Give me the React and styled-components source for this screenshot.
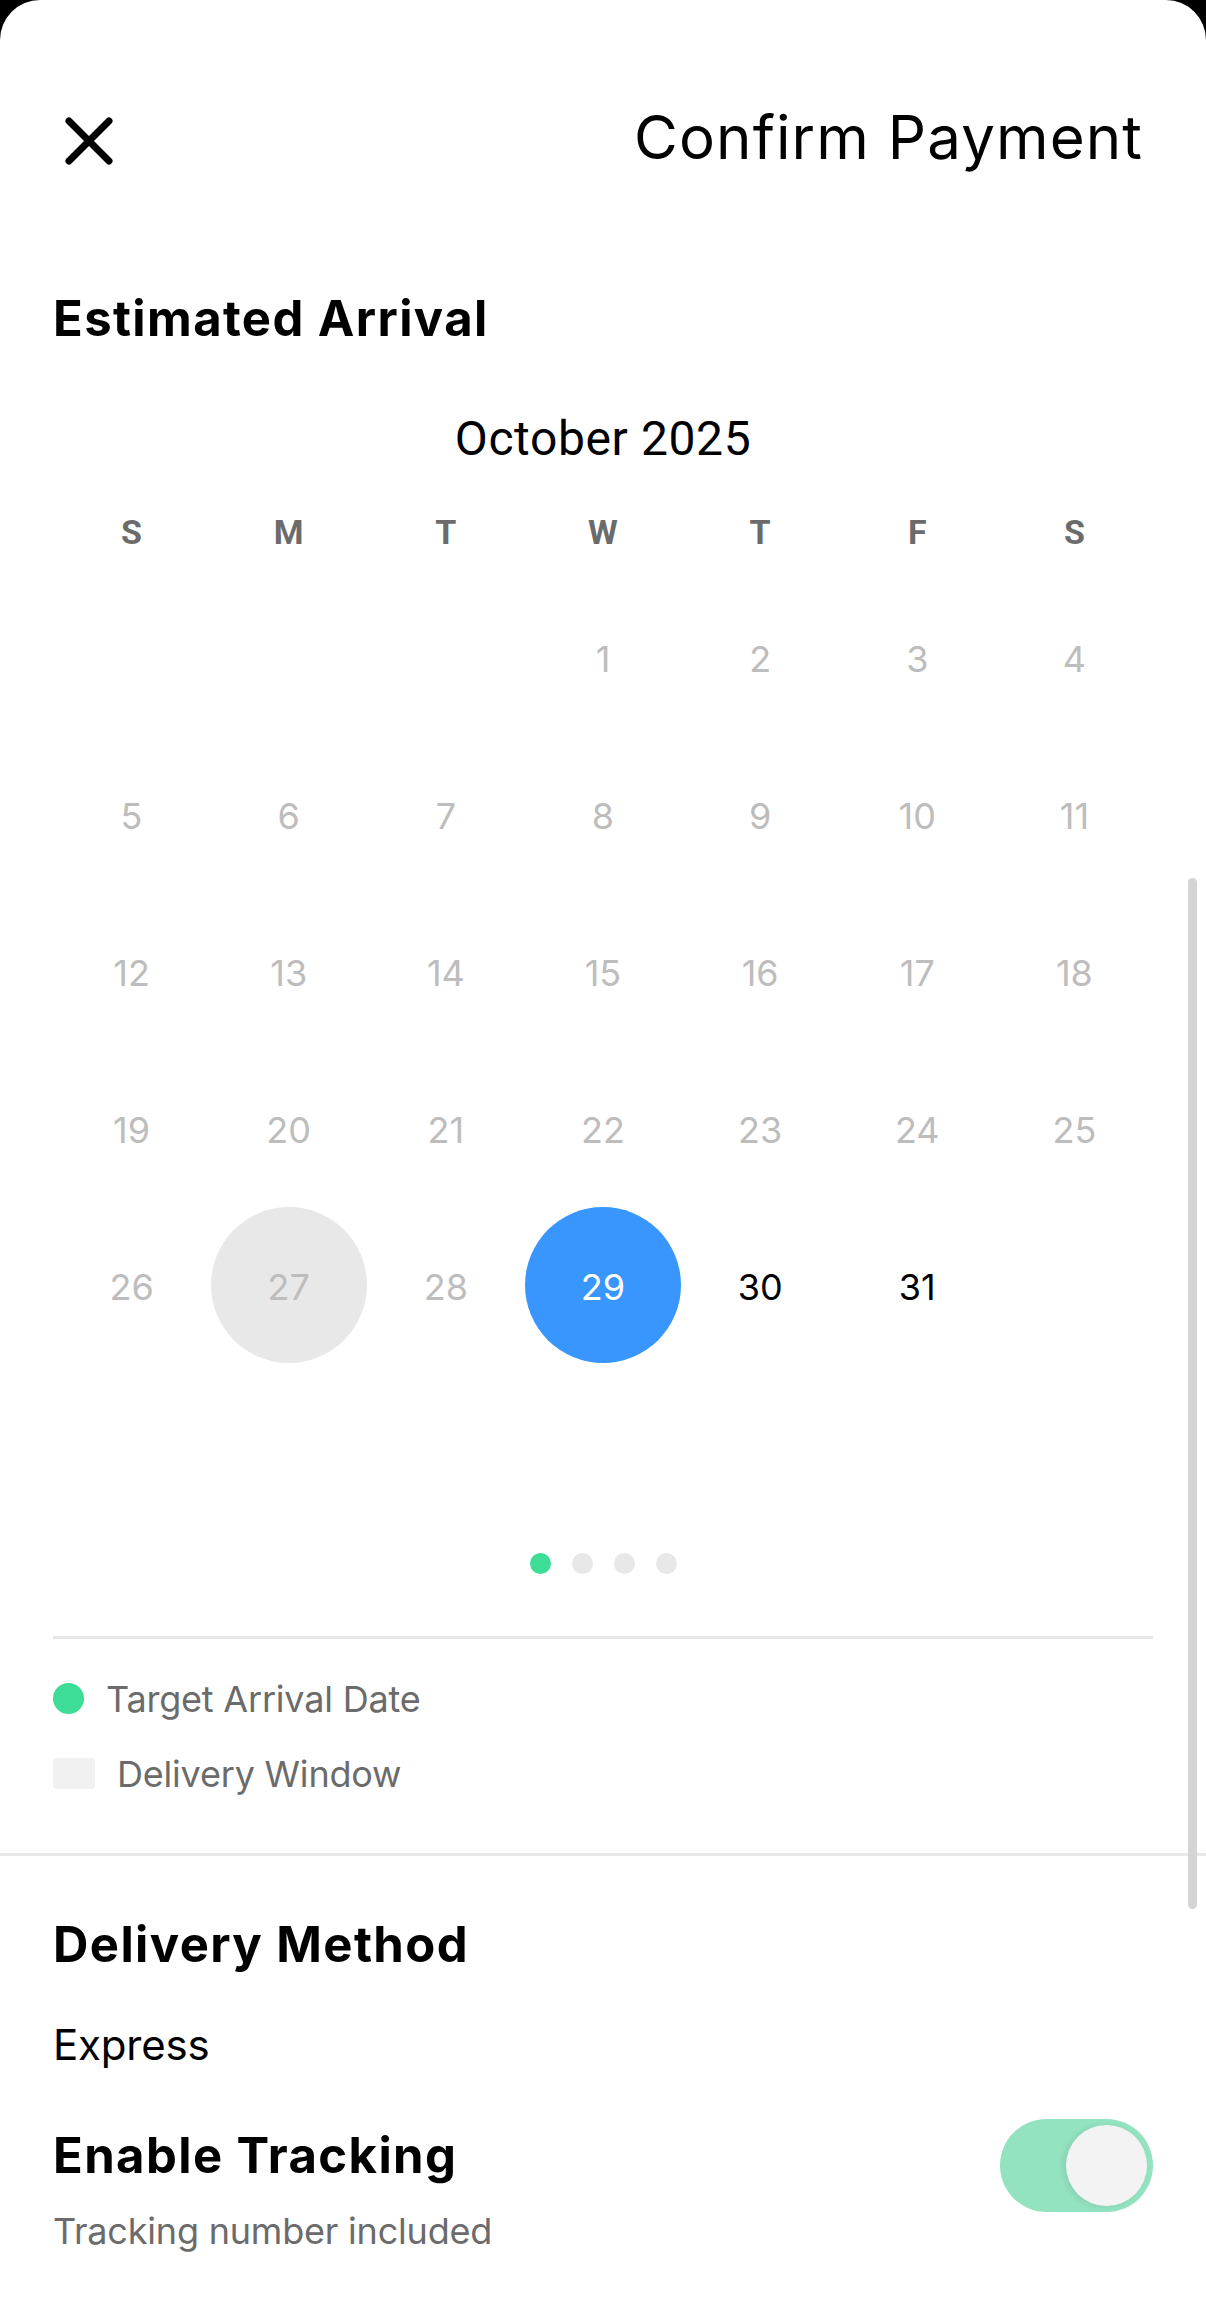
import React from "react";
import styled, { createGlobalStyle } from "styled-components";

const GlobalStyle = createGlobalStyle`
  html, body {
    margin: 0;
    padding: 0;
    background: #000;
  }
  body {
    font-family: Inter, "Noto Sans", sans-serif;
    -webkit-font-smoothing: antialiased;
  }
  * { box-sizing: border-box; }
`;

const Sheet = styled.div`
  position: relative;
  width: 1206px;
  min-height: 2307px;
  background: #fff;
  border-radius: 40px 40px 0 0;
  padding-top: 101px;
  overflow: hidden;
`;

const Header = styled.header`
  display: flex;
  align-items: center;
  justify-content: space-between;
  height: 72px;
  padding: 0 63px 0 65px;
`;

const CloseButton = styled.button`
  display: flex;
  align-items: center;
  justify-content: center;
  width: 48px;
  height: 48px;
  padding: 0;
  margin-top: 8px;
  border: none;
  background: transparent;
  cursor: pointer;
`;

const Title = styled.h1`
  margin: 0;
  font-size: 60px;
  line-height: 72px;
  font-weight: 400;
  color: #000;
  letter-spacing: 1.1px;
`;

const Section = styled.section`
  padding: ${(p) => p.$pad || "0 53px"};
`;

const SectionTitle = styled.h2`
  margin: 0;
  font-size: 49px;
  line-height: 58px;
  font-weight: 700;
  color: #000;
  letter-spacing: 1.4px;
`;

const Calendar = styled.div`
  margin-top: 62px;
`;

const MonthTitle = styled.div`
  text-align: center;
  font-family: Roboto, "Liberation Sans", sans-serif;
  font-size: 48px;
  line-height: 58px;
  color: #000;
  letter-spacing: 0.6px;
`;

const WeekGrid = styled.div`
  display: grid;
  grid-template-columns: repeat(7, 1fr);
  margin-top: 18px;
`;

const WeekDay = styled.div`
  height: 92px;
  line-height: 92px;
  text-align: center;
  font-family: Roboto, "Liberation Sans", sans-serif;
  font-size: 34px;
  font-weight: 700;
  color: #6b6b6b;
`;

const DayGrid = styled.div`
  display: grid;
  grid-template-columns: repeat(7, 1fr);
  grid-auto-rows: 157px;
`;

const DayCell = styled.div`
  display: flex;
  align-items: center;
  justify-content: center;
`;

const Day = styled.div`
  width: 156px;
  height: 156px;
  border-radius: 50%;
  display: flex;
  align-items: center;
  justify-content: center;
  padding-top: 4px;
  font-size: 36px;
  font-weight: 400;
  background: ${(p) =>
    p.$variant === "selected" ? "#3896fe" : p.$variant === "window" ? "#e8e8e8" : "transparent"};
  color: ${(p) =>
    p.$variant === "selected" ? "#fff" : p.$variant === "active" ? "#000" : "#bdbdbd"};
`;

const Pager = styled.div`
  display: flex;
  justify-content: center;
  gap: 21px;
  margin-top: 33px;
`;

const PagerDot = styled.span`
  width: 21px;
  height: 21px;
  border-radius: 50%;
  background: ${(p) => (p.$active ? "#3ddc97" : "#e8e8e8")};
`;

const Divider = styled.div`
  height: 3px;
  background: #e8e8e8;
  margin: ${(p) => p.$margin || "0"};
`;

const Legend = styled.div`
  display: flex;
  flex-direction: column;
  gap: 30px;
  padding: 37px 0 57px;
`;

const LegendRow = styled.div`
  display: flex;
  align-items: center;
  height: 45px;
  gap: ${(p) => p.$gap || "22px"};
`;

const LegendDot = styled.span`
  width: 31px;
  height: 31px;
  border-radius: 50%;
  background: #3ddc97;
  flex-shrink: 0;
`;

const LegendBox = styled.span`
  width: 42px;
  height: 31px;
  border-radius: 4px;
  background: #f0f1f0;
  flex-shrink: 0;
`;

const Muted = styled.span`
  font-size: 36px;
  line-height: 44px;
  color: #6b6b6b;
  letter-spacing: -0.2px;
`;

const Value = styled.div`
  margin-top: 46px;
  font-size: 42px;
  line-height: 50px;
  color: #000;
  letter-spacing: -0.2px;
`;

const ToggleRow = styled.div`
  display: flex;
  align-items: flex-start;
  justify-content: space-between;
  margin-top: 57px;
`;

const ToggleText = styled.div`
  display: flex;
  flex-direction: column;
  gap: 24px;
`;

const Switch = styled.div`
  position: relative;
  width: 153px;
  height: 93px;
  margin-top: -8px;
  border-radius: 47px;
  background: #93e2c0;
  flex-shrink: 0;
`;

const Thumb = styled.span`
  position: absolute;
  top: 6px;
  right: 6px;
  width: 81px;
  height: 81px;
  border-radius: 50%;
  background: #f2f3f2;
  box-shadow: -3px 1px 6px rgba(0, 0, 0, 0.08);
`;

const ScrollBar = styled.div`
  position: absolute;
  right: 9px;
  top: 878px;
  width: 9px;
  height: 1031px;
  border-radius: 5px;
  background: #d4d4d4;
`;

const CloseIcon = () => (
  <svg width="48" height="48" viewBox="0 0 48 48" fill="none">
    <path d="M4 4L44 44M44 4L4 44" stroke="#000" strokeWidth="7" strokeLinecap="round" />
  </svg>
);

const weekdays = ["S", "M", "T", "W", "T", "F", "S"];

function buildDays() {
  const cells = [];
  for (let i = 0; i < 3; i++) cells.push(null);
  for (let d = 1; d <= 31; d++) cells.push(d);
  while (cells.length < 42) cells.push(null);
  return cells;
}

function variantFor(d) {
  if (d === 29) return "selected";
  if (d === 27) return "window";
  if (d === 30 || d === 31) return "active";
  return "past";
}

export default function App() {
  const days = buildDays();
  return (
    <>
      <GlobalStyle />
      <Sheet>
        <Header>
          <CloseButton aria-label="Close">
            <CloseIcon />
          </CloseButton>
          <Title>Confirm Payment</Title>
        </Header>

        <Section $pad="117px 53px 0">
          <SectionTitle>Estimated Arrival</SectionTitle>
          <Calendar>
            <MonthTitle>October 2025</MonthTitle>
            <WeekGrid>
              {weekdays.map((w, i) => (
                <WeekDay key={i}>{w}</WeekDay>
              ))}
            </WeekGrid>
            <DayGrid>
              {days.map((d, i) => (
                <DayCell key={i}>
                  {d && <Day $variant={variantFor(d)}>{d}</Day>}
                </DayCell>
              ))}
            </DayGrid>
          </Calendar>
          <Pager>
            <PagerDot $active />
            <PagerDot />
            <PagerDot />
            <PagerDot />
          </Pager>
          <Divider $margin="62px 0 0" />
          <Legend>
            <LegendRow>
              <LegendDot />
              <Muted>Target Arrival Date</Muted>
            </LegendRow>
            <LegendRow>
              <LegendBox />
              <Muted>Delivery Window</Muted>
            </LegendRow>
          </Legend>
        </Section>

        <Divider />

        <Section $pad="60px 53px 0">
          <SectionTitle>Delivery Method</SectionTitle>
          <Value>Express</Value>
          <ToggleRow>
            <ToggleText>
              <SectionTitle>Enable Tracking</SectionTitle>
              <Muted>Tracking number included</Muted>
            </ToggleText>
            <Switch>
              <Thumb />
            </Switch>
          </ToggleRow>
        </Section>

        <ScrollBar />
      </Sheet>
    </>
  );
}
